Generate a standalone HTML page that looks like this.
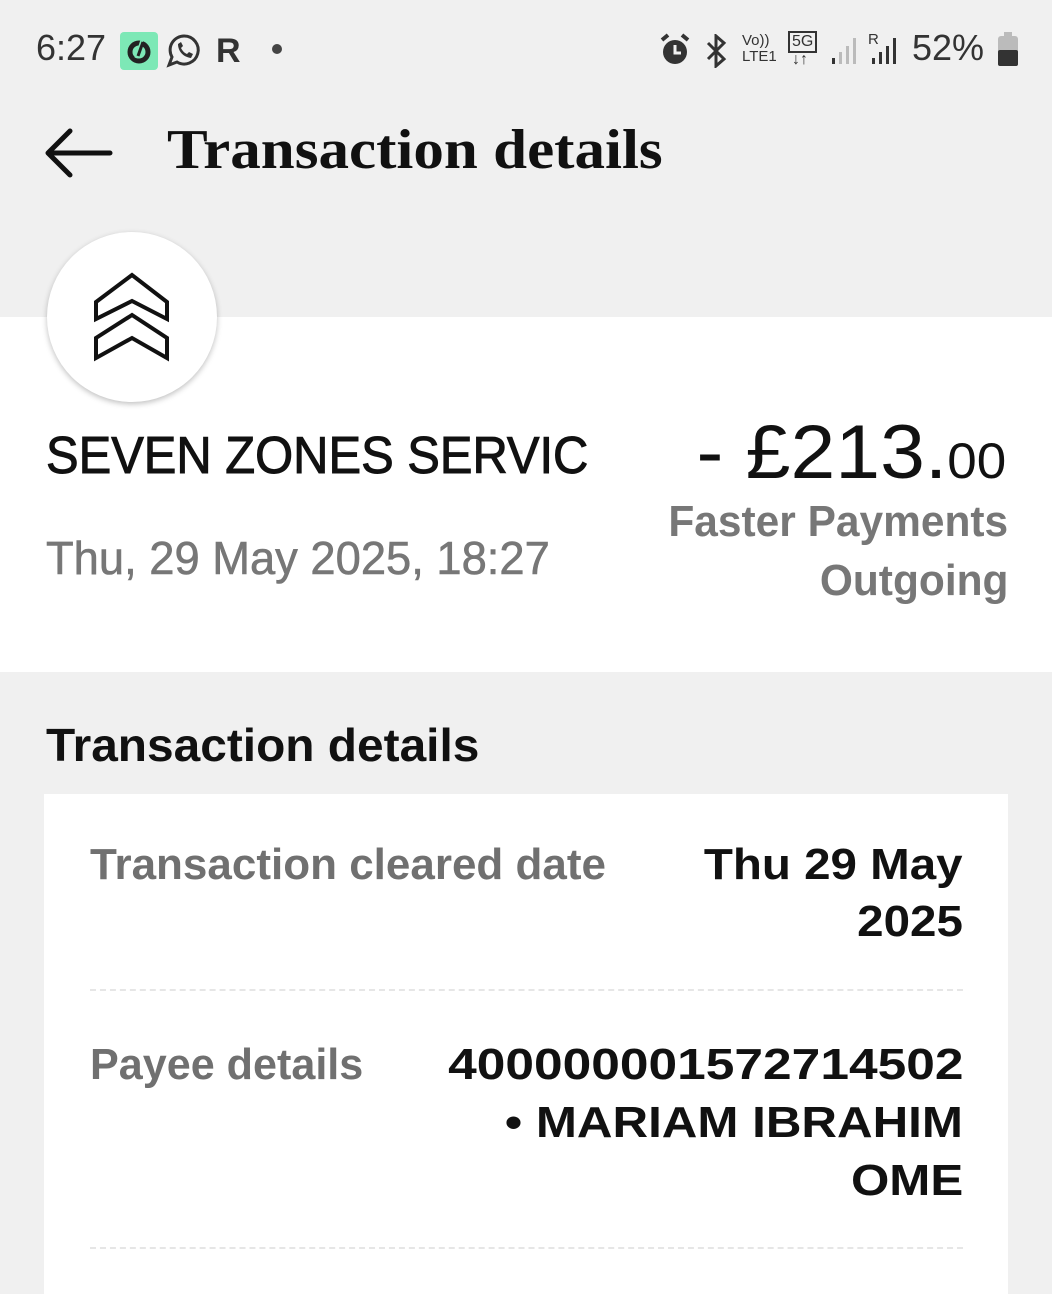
<!DOCTYPE html>
<html><head><meta charset="utf-8"><style>
*{margin:0;padding:0;box-sizing:border-box}
body{width:1052px;height:1280px;background:#f0f0f0;position:relative;overflow:hidden;font-family:"Liberation Sans",sans-serif}
.a{position:absolute;white-space:nowrap;line-height:1}
.l{transform-origin:left center}
.r{transform-origin:right center}
</style></head><body>
<!-- status bar -->
<div class="a" style="left:36px;top:30px;font-size:36px;color:#333;">6:27</div>
<div class="a" style="left:120px;top:32px;width:38px;height:38px;background:#7de8b6;border-radius:4px;"></div>
<svg class="a" style="left:124px;top:36px" width="30" height="30" viewBox="0 0 30 30"><circle cx="15" cy="16" r="9" fill="none" stroke="#222" stroke-width="5"/><path d="M18 4 L12 22" stroke="#7de8b6" stroke-width="3"/><path d="M19 6 L14 20" stroke="#222" stroke-width="3"/></svg>
<svg class="a" style="left:166px;top:33px" width="36" height="36" viewBox="0 0 36 36"><path d="M18 3a14 14 0 1 1-7 26l-8 3 3-8A14 14 0 0 1 18 3z" fill="none" stroke="#333" stroke-width="3"/><path d="M12 11c0 7 5 13 13 14l2-4-4-2-2 2c-3-1-5-4-6-6l2-2-2-4z" fill="#333"/></svg>
<div class="a" style="left:216px;top:34px;font-size:34px;font-weight:bold;color:#333;">R</div>
<div class="a" style="left:272px;top:44px;width:10px;height:10px;border-radius:50%;background:#444;"></div>
<svg class="a" style="left:658px;top:32px" width="34" height="36" viewBox="0 0 34 36"><circle cx="17" cy="20" r="12" fill="#333"/><path d="M4 8l6-5M30 8l-6-5" stroke="#333" stroke-width="4"/><path d="M17 13v8h6" stroke="#f0f0f0" stroke-width="3" fill="none"/></svg>
<svg class="a" style="left:702px;top:34px" width="28" height="34" viewBox="0 0 28 34"><path d="M6 9l16 16-8 7V2l8 7L6 25" fill="none" stroke="#333" stroke-width="3"/></svg>
<div class="a" style="left:742px;top:33px;font-size:15px;color:#333;line-height:16px;">Vo))<br>LTE1</div>
<div class="a" style="left:788px;top:31px;font-size:16px;color:#333;border:2px solid #333;padding:1px 2px;line-height:16px;">5G</div>
<div class="a" style="left:792px;top:52px;font-size:16px;color:#333;">↓↑</div>
<svg class="a" style="left:830px;top:34px" width="30" height="32"><rect x="2" y="24" width="3" height="6" fill="#333"/><rect x="9" y="18" width="3" height="12" fill="#bbb"/><rect x="16" y="12" width="3" height="18" fill="#bbb"/><rect x="23" y="4" width="3" height="26" fill="#bbb"/></svg>
<div class="a" style="left:868px;top:32px;font-size:15px;color:#333;">R</div>
<svg class="a" style="left:868px;top:34px" width="32" height="32"><rect x="4" y="24" width="3" height="6" fill="#333"/><rect x="11" y="18" width="3" height="12" fill="#333"/><rect x="18" y="12" width="3" height="18" fill="#333"/><rect x="25" y="4" width="3" height="26" fill="#333"/></svg>
<div class="a" style="left:912px;top:30px;font-size:36px;color:#333;">52%</div>
<svg class="a" style="left:996px;top:32px" width="24" height="36"><rect x="8" y="0" width="8" height="4" fill="#bbb"/><rect x="2" y="4" width="20" height="30" rx="3" fill="#bbb"/><rect x="2" y="18" width="20" height="16" rx="2" fill="#333"/></svg>

<!-- header -->
<svg class="a" style="left:40px;top:124px" width="76" height="60" viewBox="0 0 76 60"><path d="M70 29H8M30 7L8 29l22 22" fill="none" stroke="#111" stroke-width="5" stroke-linecap="round" stroke-linejoin="round"/></svg>
<div class="a l" style="left:167px;top:122px;font-family:'Liberation Serif',serif;font-weight:bold;font-size:56px;color:#111;transform:scaleX(1.09)">Transaction details</div>

<!-- white card -->
<div class="a" style="left:0;top:317px;width:1052px;height:355px;background:#fff"></div>
<div class="a" style="left:47px;top:232px;width:170px;height:170px;border-radius:50%;background:#fff;box-shadow:0 2px 6px rgba(0,0,0,.25)"></div>
<svg class="a" style="left:0;top:0" width="300" height="420"><g fill="none" stroke="#111" stroke-width="4" stroke-linejoin="miter"><path d="M132 275L96 302V319L132 301L167 319V302Z"/><path d="M132 315L96 338V358L132 338L167 358V338Z"/></g></svg>

<div class="a l" style="left:46px;top:430px;font-size:52px;color:#111;transform:scaleX(0.94);-webkit-text-stroke:1px #111">SEVEN ZONES SERVIC</div>
<div class="a l" style="left:46px;top:535px;font-size:46px;color:#777;transform:scaleX(0.985);-webkit-text-stroke:0.6px #777">Thu, 29 May 2025, 18:27</div>
<div class="a r" style="right:46px;top:415px;font-size:76px;color:#111;transform:scaleX(1.06)">- £213.<span style="font-size:50px">00</span></div>
<div class="a r" style="right:44px;top:500px;font-size:44px;font-weight:bold;color:#777;transform:scaleX(0.965)">Faster Payments</div>
<div class="a r" style="right:44px;top:559px;font-size:44px;font-weight:bold;color:#777;transform:scaleX(0.965)">Outgoing</div>

<div class="a l" style="left:46px;top:722px;font-size:46px;font-weight:bold;color:#111;transform:scaleX(1.04)">Transaction details</div>

<div class="a" style="left:44px;top:794px;width:964px;height:500px;background:#fff"></div>
<div class="a l" style="left:90px;top:843px;font-size:44px;font-weight:bold;color:#707070;transform:scaleX(1.0)">Transaction cleared date</div>
<div class="a r" style="right:89px;top:843px;font-size:44px;font-weight:bold;color:#111;transform:scaleX(1.08)">Thu 29 May</div>
<div class="a r" style="right:89px;top:900px;font-size:44px;font-weight:bold;color:#111;transform:scaleX(1.08)">2025</div>
<div class="a" style="left:90px;top:989px;width:873px;border-top:2px dashed #e6e6e6"></div>
<div class="a l" style="left:90px;top:1043px;font-size:44px;font-weight:bold;color:#707070;transform:scaleX(0.98)">Payee details</div>
<div class="a r" style="right:89px;top:1043px;font-size:44px;font-weight:bold;color:#111;transform:scaleX(1.17)">400000001572714502</div>
<div class="a r" style="right:89px;top:1101px;font-size:44px;font-weight:bold;color:#111;transform:scaleX(1.12)">• MARIAM IBRAHIM</div>
<div class="a r" style="right:89px;top:1159px;font-size:44px;font-weight:bold;color:#111;transform:scaleX(1.12)">OME</div>
<div class="a" style="left:90px;top:1247px;width:873px;border-top:2px dashed #e6e6e6"></div>
</body></html>
